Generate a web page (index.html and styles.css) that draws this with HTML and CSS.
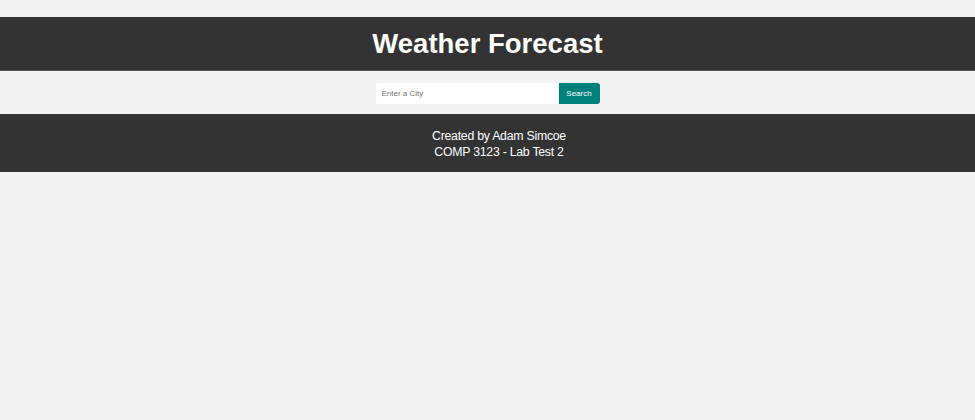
FILE: index.html
```html
<!DOCTYPE html>
<html>
<head>
<meta charset="utf-8">
<title>Weather Forecast</title>
<link rel="stylesheet" href="styles.css">
</head>
<body>
<header class="site-header">
  <h1 class="title">Weather Forecast</h1>
</header>
<section class="search">
  <form class="search-form">
    <input class="search-input" type="text" placeholder="Enter a City">
    <button class="search-btn" type="button">Search</button>
  </form>
</section>
<footer class="site-footer">
  <p class="footer-line">Created by Adam Simcoe</p>
  <p class="footer-line">COMP 3123 - Lab Test 2</p>
</footer>
</body>
</html>
```
FILE: styles.css
```css
html, body {
  margin: 0;
  padding: 0;
  background: #f3f3f3;
  font-family: "Liberation Sans", Arial, sans-serif;
}
body {
  padding-top: 17px;
}
.site-header {
  background: #333333;
  color: #ffffff;
  height: 53px;
  display: flex;
  align-items: center;
  justify-content: center;
  border-bottom: 1px solid #555;
}
.title {
  margin: 0;
  font-size: 27.5px;
  font-weight: bold;
}
.search {
  height: 43px;
  display: flex;
  align-items: center;
  justify-content: center;
}
.search-form {
  display: flex;
  margin-top: 1px;
}
.search-input {
  width: 183px;
  height: 21px;
  box-sizing: border-box;
  border: none;
  border-radius: 3px 0 0 3px;
  background: #ffffff;
  padding: 0 6px;
  font-family: "Liberation Sans", Arial, sans-serif;
  font-size: 8px;
  color: #333;
  outline: none;
}
.search-input::placeholder {
  color: #757575;
}
.search-btn {
  width: 41px;
  height: 21px;
  border: none;
  border-radius: 0 3px 3px 0;
  background: #00807a;
  color: #ffffff;
  font-family: "Liberation Sans", Arial, sans-serif;
  font-size: 8px;
  padding: 0;
}
.site-footer {
  background: #333333;
  color: #ffffff;
  height: 58px;
  box-sizing: border-box;
  padding-left: 23px;
  padding-top: 2px;
  display: flex;
  flex-direction: column;
  align-items: center;
  justify-content: center;
}
.footer-line {
  margin: 0;
  font-size: 12.3px;
  line-height: 16px;
  letter-spacing: -0.25px;
}
```
